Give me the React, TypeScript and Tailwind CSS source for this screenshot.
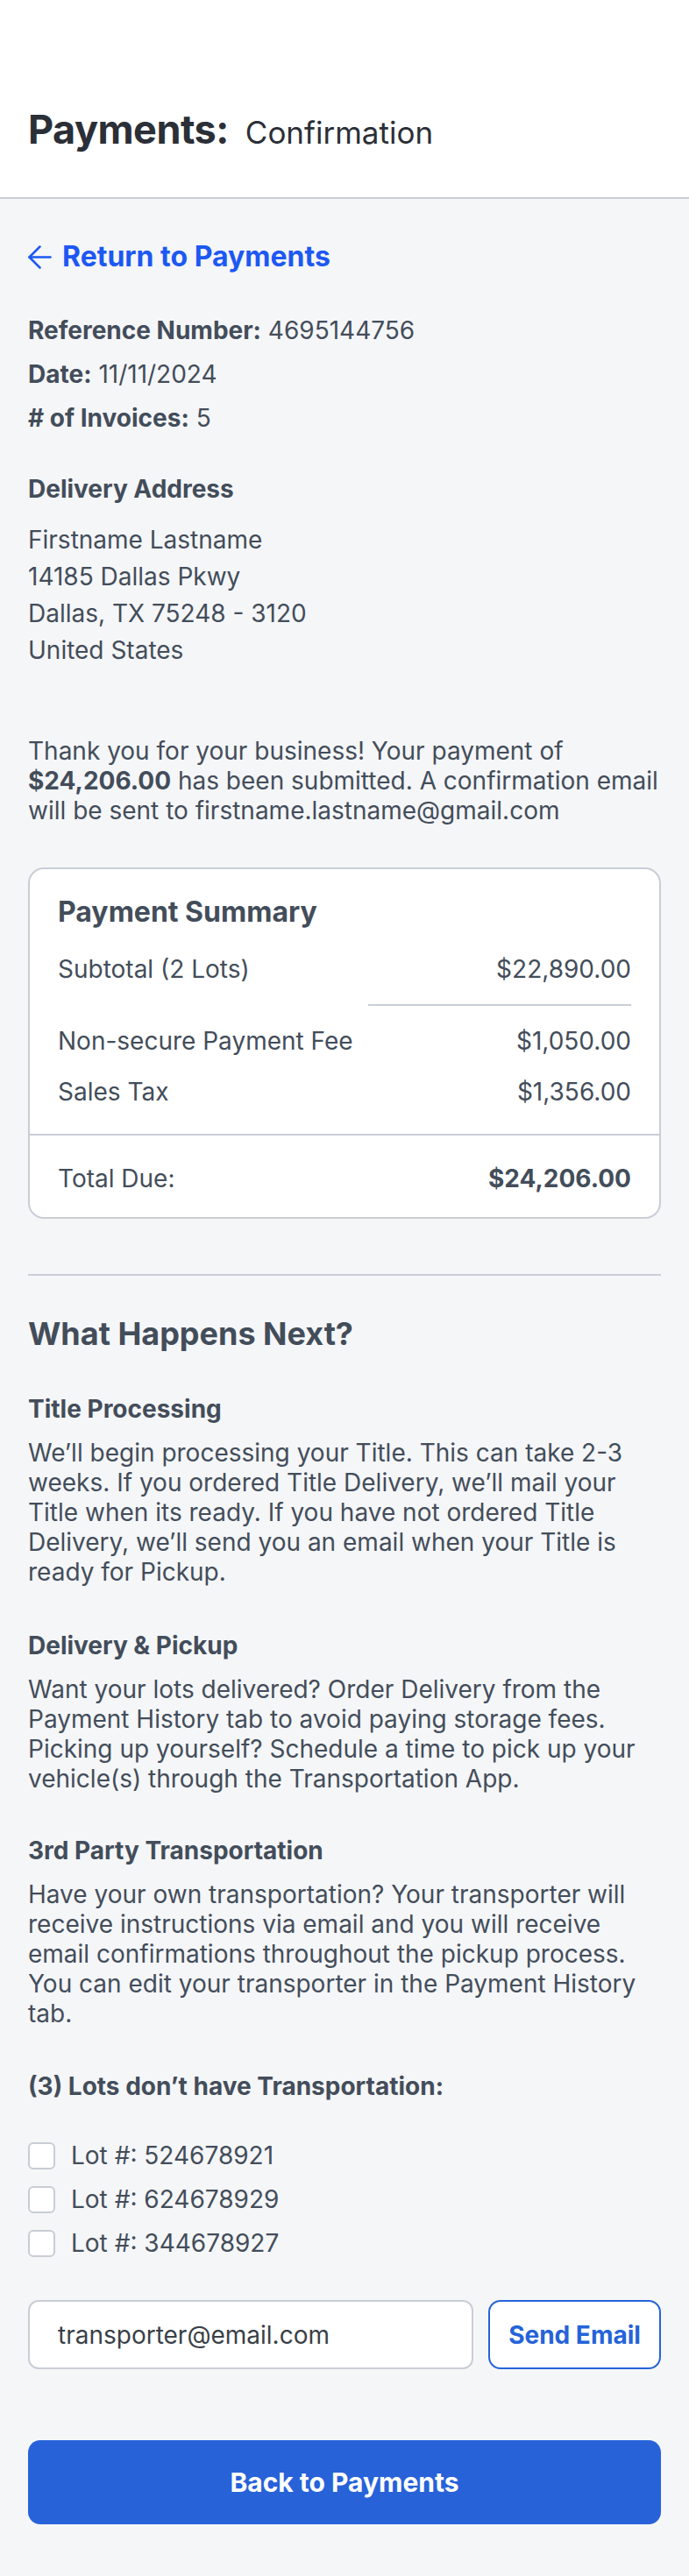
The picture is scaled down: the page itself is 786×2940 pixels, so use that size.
import React, { useState } from 'react';

const lots = ['524678921', '624678929', '344678927'];

const BackArrow: React.FC = () => (
    <svg width="27" height="27" viewBox="0 0 27 27" fill="none" stroke="currentColor" strokeWidth="2.5" strokeLinecap="round" strokeLinejoin="round">
        <path d="M25.5 13.5H1.5" />
        <path d="M13.5 1.5L1.5 13.5l12 12" />
    </svg>
);

const SummaryRow: React.FC<{ label: string; value: string }> = ({ label, value }) => (
    <div className="flex justify-between leading-[40px]">
        <span>{label}</span>
        <span>{value}</span>
    </div>
);

const App: React.FC = () => {
    const [checked, setChecked] = useState<Record<string, boolean>>({});
    const [email, setEmail] = useState('transporter@email.com');

    return (
        <div className="min-h-[2940px] bg-[#f5f6f8] text-[#434d5a] text-[28px] font-['Inter',sans-serif]">
            {/* Header */}
            <header className="h-[227px] bg-white border-b-2 border-[#c9cfd7] flex items-end px-8 pb-[48px]">
                <div className="flex items-baseline gap-[19px] text-[#2b2f37]">
                    <span className="text-[45px] font-bold leading-[52px] tracking-[-0.5px]">Payments:</span>
                    <span className="text-[35px] leading-[52px]">Confirmation</span>
                </div>
            </header>

            <main className="px-8 pt-[46px] pb-[62px]">
                {/* Return link */}
                <a href="#" className="flex items-center gap-[12px] text-[#1d58f3] font-bold text-[32px] leading-[40px]">
                    <BackArrow />
                    <span>Return to Payments</span>
                </a>

                {/* Reference info */}
                <div className="mt-[44px] flex flex-col gap-[10px] leading-[40px]">
                    <p><span className="font-bold">Reference Number:</span> 4695144756</p>
                    <p><span className="font-bold">Date:</span> 11/11/2024</p>
                    <p><span className="font-bold"># of Invoices:</span> 5</p>
                </div>

                {/* Delivery address */}
                <h3 className="mt-[41px] font-bold leading-[40px]">Delivery Address</h3>
                <div className="mt-[17px] leading-[42px]">
                    <p>Firstname Lastname</p>
                    <p>14185 Dallas Pkwy</p>
                    <p>Dallas, TX 75248 - 3120</p>
                    <p>United States</p>
                </div>

                <p className="mt-[77px] leading-[34px]">
                    Thank you for your business! Your payment of <span className="font-bold">$24,206.00</span> has been submitted. A confirmation email will be sent to firstname.lastname@gmail.com
                </p>

                {/* Payment summary card */}
                <div className="mt-[48px] bg-white border-2 border-[#c9ced6] rounded-[18px]">
                    <div className="px-8 pt-[29px] pb-[28px]">
                        <h2 className="text-[32px] font-bold leading-[40px]">Payment Summary</h2>
                        <div className="mt-[25px]">
                            <SummaryRow label="Subtotal (2 Lots)" value="$22,890.00" />
                        </div>
                        <div className="flex justify-end mt-[20px]">
                            <div className="w-[300px] h-[2px] bg-[#c9ced6]" />
                        </div>
                        <div className="mt-[20px] flex flex-col gap-[18px]">
                            <SummaryRow label="Non-secure Payment Fee" value="$1,050.00" />
                            <SummaryRow label="Sales Tax" value="$1,356.00" />
                        </div>
                    </div>
                    <div className="border-t-2 border-[#c9ced6] px-8 pt-[29px] pb-[24px] flex justify-between leading-[40px]">
                        <span>Total Due:</span>
                        <span className="font-bold">$24,206.00</span>
                    </div>
                </div>

                <div className="mt-[63px] h-[2px] bg-[#c9cfd6]" />

                {/* What happens next */}
                <h2 className="mt-[44px] text-[36px] font-bold leading-[44px]">What Happens Next?</h2>

                <h3 className="mt-[44px] font-bold leading-[40px]">Title Processing</h3>
                <p className="mt-[13px] leading-[34px]">
                    We’ll begin processing your Title. This can take 2-3 weeks. If you ordered Title Delivery, we’ll mail your Title when its ready. If you have not ordered Title Delivery, we’ll send you an email when your Title is ready for Pickup.
                </p>

                <h3 className="mt-[47px] font-bold leading-[40px]">Delivery &amp; Pickup</h3>
                <p className="mt-[13px] leading-[34px]">
                    Want your lots delivered? Order Delivery from the Payment History tab to avoid paying storage fees. Picking up yourself? Schedule a time to pick up your vehicle(s) through the Transportation App.
                </p>

                <h3 className="mt-[45px] font-bold leading-[40px]">3rd Party Transportation</h3>
                <p className="mt-[13px] leading-[34px]">
                    Have your own transportation? Your transporter will receive instructions via email and you will receive email confirmations throughout the pickup process. You can edit your transporter in the Payment History tab.
                </p>

                <h3 className="mt-[46px] font-bold leading-[40px]">(3) Lots don’t have Transportation:</h3>

                <div className="mt-[39px] flex flex-col gap-[10px]">
                    {lots.map((lot) => (
                        <label key={lot} className="flex items-center gap-[18px] leading-[40px] cursor-pointer">
                            <input
                                type="checkbox"
                                checked={!!checked[lot]}
                                onChange={() => setChecked(prev => ({ ...prev, [lot]: !prev[lot] }))}
                                className="appearance-none w-[31px] h-[31px] bg-white border-[2.5px] border-[#c8cdd4] rounded-[6px] checked:bg-[#2762d9] checked:border-[#2762d9]"
                            />
                            <span>Lot #: {lot}</span>
                        </label>
                    ))}
                </div>

                {/* Transporter email */}
                <div className="mt-[45px] flex gap-[17px]">
                    <input
                        type="text"
                        value={email}
                        onChange={(e) => setEmail(e.target.value)}
                        className="flex-1 min-w-0 h-[79px] bg-white border-2 border-[#c9ced6] rounded-[12px] px-8 text-[28px] text-[#3a3f47] focus:outline-none"
                    />
                    <button className="w-[197px] h-[79px] bg-white border-2 border-[#2563d9] rounded-[14px] text-[#2563d9] font-bold text-[28px]">
                        Send Email
                    </button>
                </div>

                <button className="mt-[81px] w-full h-[96px] bg-[#2762d9] rounded-[14px] text-white font-bold text-[30px]">
                    Back to Payments
                </button>
            </main>
        </div>
    );
};

export default App;
